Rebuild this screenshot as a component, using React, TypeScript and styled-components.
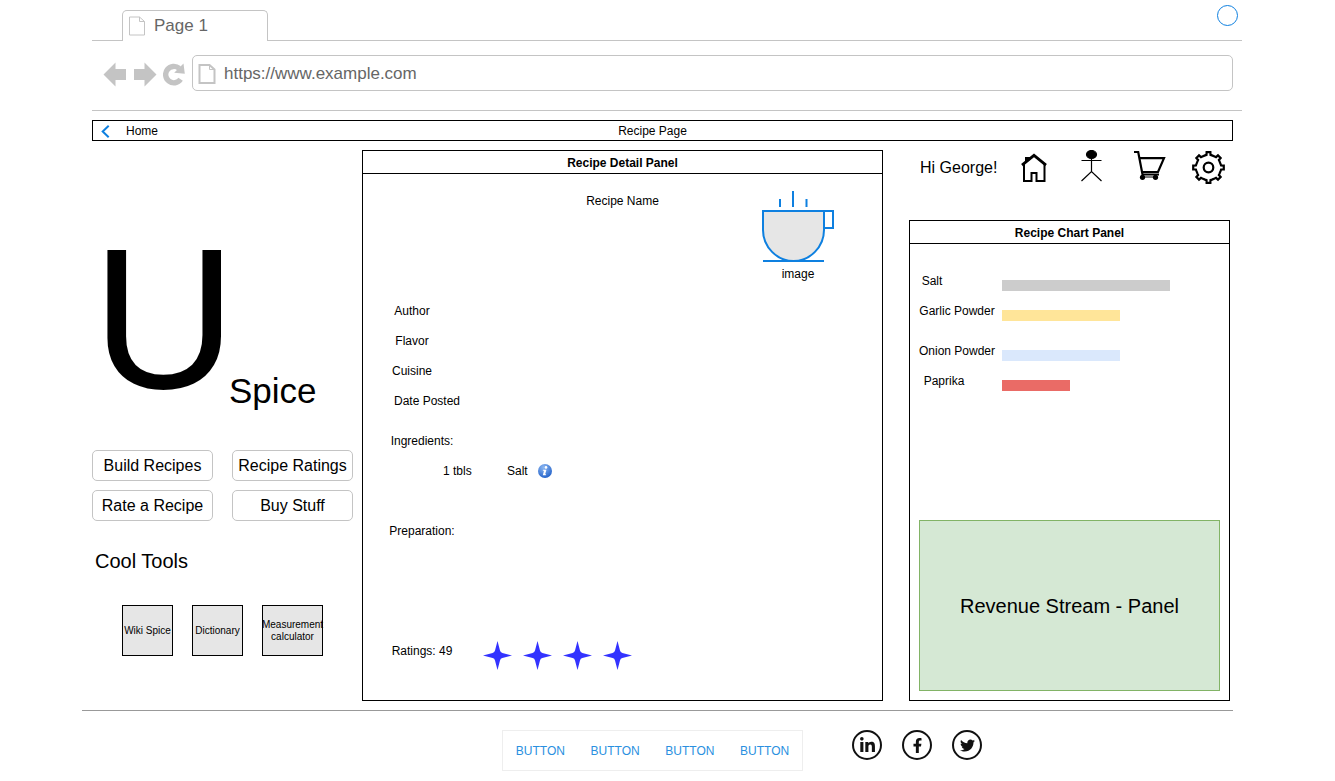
import React from "react";
import styled, { createGlobalStyle } from "styled-components";
import { FaFacebookF, FaLinkedinIn, FaTwitter } from "react-icons/fa";

const GlobalStyle = createGlobalStyle`
  *, *::before, *::after { box-sizing: border-box; }
  body {
    margin: 0;
    background: #fff;
    color: #000;
    font-family: "Liberation Sans", Arial, sans-serif;
    font-size: 12px;
    line-height: 20px;
  }
  h1, h2, p, ul, figure { margin: 0; padding: 0; }
  button, input { font: inherit; color: inherit; }
  a { color: inherit; text-decoration: none; }
  svg { display: block; flex: none; }
`;

const chrome = "#c4c4c4";
const blue = "#0e80e0";

/* ---------- browser frame ---------- */

const Frame = styled.header`
  margin: 0 93px 0 92px;
`;

const TabStrip = styled.div`
  display: flex;
  justify-content: space-between;
  align-items: flex-end;
  height: 41px;
  padding: 0 4px 0 30px;
  border-bottom: 1px solid ${chrome};
`;

const Tab = styled.button`
  display: flex;
  align-items: center;
  gap: 8px;
  width: 146px;
  height: 31px;
  margin-bottom: -1px;
  padding: 0 5px;
  border: 1px solid ${chrome};
  border-bottom: 0;
  border-radius: 5px 5px 0 0;
  background: #fff;
  color: #666;
  font-size: 17px;
`;

const WindowButton = styled.button`
  width: 21px;
  height: 21px;
  margin-bottom: 14px;
  padding: 0;
  border: 1px solid ${blue};
  border-radius: 50%;
  background: #fff;
`;

const Toolbar = styled.div`
  display: flex;
  align-items: center;
  gap: 6px;
  padding: 14px 9px 19px 11px;
  border-bottom: 1px solid ${chrome};
`;

const NavButton = styled.button`
  display: flex;
  padding: 2px 0 0;
  border: 0;
  background: none;
  color: ${chrome};
`;

const Address = styled.label`
  display: flex;
  flex: 1;
  align-items: center;
  gap: 8px;
  height: 36px;
  margin-left: 1px;
  padding: 1px 5px 0;
  border: 1px solid ${chrome};
  border-radius: 5px;
  color: #666;
  font-size: 17px;
`;

const AddressInput = styled.input`
  flex: 1;
  min-width: 0;
  padding: 0;
  border: 0;
  outline: 0;
  background: none;
`;

/* ---------- page ---------- */

const Page = styled.div`
  margin: 9px 102px 0 92px;
`;

const TitleBar = styled.nav`
  display: grid;
  grid-template-columns: 1fr auto 1fr;
  align-items: center;
  height: 21px;
  padding: 0 28px 0 8px;
  border: 1px solid #000;
`;

const BackLink = styled.a`
  display: flex;
  align-items: center;
  gap: 16px;
`;

const PageTitle = styled.h1`
  font-size: 12px;
  font-weight: 400;
`;

const Columns = styled.main`
  display: grid;
  grid-template-columns: 261px minmax(0, 1fr) 321px;
  padding: 9px 3px 0 0;
`;

const Sidebar = styled.aside`
  display: flex;
  flex-direction: column;
`;

const Logo = styled.div`
  display: flex;
  height: 300px;
`;

const LogoLetter = styled.span`
  width: 137px;
  padding-top: 56px;
  font-size: 200px;
  line-height: 226px;
`;

const LogoWord = styled.span`
  padding-top: 221px;
  font-size: 35px;
  line-height: 40px;
`;

const Actions = styled.div`
  display: grid;
  grid-template-columns: 1fr 1fr;
  gap: 9px 19px;
`;

const ActionButton = styled.button`
  height: 31px;
  padding: 0;
  border: 1px solid ${chrome};
  border-radius: 5px;
  background: #fff;
  font-size: 16px;
  white-space: nowrap;
`;

const ToolsHeading = styled.h2`
  margin: 28px 0 0 3px;
  font-size: 20px;
  font-weight: 400;
  line-height: 24px;
`;

const Tools = styled.div`
  display: flex;
  gap: 19px;
  margin: 32px 0 0 30px;
`;

const ToolButton = styled.button<{ $wide?: boolean }>`
  display: flex;
  align-items: center;
  justify-content: center;
  width: ${(p) => (p.$wide ? 61 : 51)}px;
  height: 51px;
  padding: 0;
  border: 1px solid #000;
  background: #e6e6e6;
  font-size: 10px;
  line-height: 12px;
`;

const Panel = styled.section`
  display: flex;
  flex-direction: column;
  border: 1px solid #000;
`;

const DetailPanel = styled(Panel)`
  margin: 0 26px 0 9px;
  padding-bottom: 30px;
`;

const PanelTitle = styled.h2`
  height: 23px;
  border-bottom: 1px solid #000;
  font-size: 12px;
  line-height: 24px;
  text-align: center;
`;

const Hero = styled.div`
  display: grid;
  grid-template-columns: 1fr auto 1fr;
  height: 127px;
  padding-top: 16px;
`;

const RecipeName = styled.p`
  grid-column: 2;
  line-height: 22px;
`;

const Picture = styled.figure`
  justify-self: end;
  margin-right: 48px;
  line-height: 22px;
  text-align: center;
`;

const Fields = styled.div`
  display: flex;
  flex-direction: column;
  gap: 10px;
  padding-left: 29px;
`;

const Label = styled.p<{ $width: number }>`
  display: flex;
  justify-content: center;
  width: ${(p) => p.$width}px;
  white-space: nowrap;
`;

const Section = styled.div<{ $gap: number }>`
  margin-top: ${(p) => p.$gap}px;
  padding-left: 29px;
`;

const Ingredient = styled.div`
  display: flex;
  align-items: center;
  margin-top: 10px;
  padding-left: 51px;
`;

const Amount = styled.span`
  width: 64px;
`;

const InfoButton = styled.button`
  display: flex;
  margin-left: 10px;
  padding: 0;
  border: 0;
  background: none;
`;

const Ratings = styled(Section)`
  display: flex;
`;

const Stars = styled.div`
  display: flex;
  gap: 11px;
  margin-left: 31px;
`;

const RightColumn = styled.div`
  display: flex;
  flex-direction: column;
`;

const UserBar = styled.div`
  display: flex;
  align-items: flex-start;
  justify-content: space-between;
  height: 70px;
  padding: 0 5px 0 11px;
`;

const Greeting = styled.span`
  padding-top: 8px;
  font-size: 16px;
`;

const UserActions = styled.div`
  display: flex;
  gap: 24px;
`;

const IconButton = styled.button`
  display: flex;
  justify-content: center;
  width: 34px;
  padding: 0;
  border: 0;
  background: none;
`;

const ChartPanel = styled(Panel)`
  flex: 1;
`;

const Chart = styled.div`
  display: flex;
  flex-direction: column;
  gap: 20px;
  padding: 27px 0 0 2px;
`;

const ChartGroup = styled.div`
  display: flex;
  flex-direction: column;
  gap: 10px;
`;

const ChartRow = styled.div`
  display: grid;
  grid-template-columns: 90px 1fr;
  align-items: end;
  height: 20px;
`;

const Bar = styled.div<{ $length: number; $color: string }>`
  width: ${(p) => p.$length}px;
  height: 11px;
  background: ${(p) => p.$color};
`;

const Revenue = styled.div`
  display: flex;
  align-items: center;
  justify-content: center;
  height: 171px;
  margin: auto 9px 9px;
  border: 1px solid #82b366;
  background: #d5e8d4;
  font-size: 20px;
`;

const Footer = styled.footer`
  display: flex;
  justify-content: center;
  gap: 49px;
  margin: 9px 102px 0 82px;
  padding: 19px 0 10px 169px;
  border-top: 1px solid #999;
`;

const ButtonGroup = styled.div`
  display: grid;
  grid-template-columns: repeat(4, 1fr);
  width: 301px;
  height: 41px;
  border: 1px solid #eee;
`;

const TextButton = styled.button`
  padding: 0;
  border: 0;
  background: none;
  color: #2a90e0;
`;

const Socials = styled.div`
  display: flex;
  gap: 20px;
`;

const SocialLink = styled.a`
  display: flex;
  align-items: center;
  justify-content: center;
  width: 30px;
  height: 30px;
  border: 2px solid #111;
  border-radius: 50%;
  color: #111;
`;

/* ---------- drawings ---------- */

const DocIcon = ({ stroke }: { stroke: number }) => (
  <svg width="18" height="20" viewBox="0 0 18 20" fill="none" stroke={chrome} strokeWidth={stroke}>
    <path d="M1.5 1H11.5L16.5 5.5V19H1.5Z" />
    <path d="M11.5 1V5.5H16.5" strokeWidth="1" />
  </svg>
);

const ArrowIcon = ({ forward }: { forward?: boolean }) => (
  <svg width="24" height="25" viewBox="0 0 24 25" fill="currentColor">
    <path d={forward ? "M23.5 12.5L11.5 0.5V7H1V18H11.5V24.5Z" : "M0.5 12.5L12.5 0.5V7H23V18H12.5V24.5Z"} />
  </svg>
);

const ReloadIcon = () => (
  <svg width="22" height="24" viewBox="0 0 22 24">
    <path d="M16.2 6.4A8.2 8.2 0 1 0 17.6 17.3" fill="none" stroke="currentColor" strokeWidth="5.4" />
    <path d="M20.5 1.5L21.8 11.8L11.2 10.8Z" fill="currentColor" />
  </svg>
);

const ChevronIcon = () => (
  <svg width="9" height="13" viewBox="0 0 9 13" fill="none" stroke={blue} strokeWidth="2">
    <path d="M7.7 0.8L1.7 6.5L7.7 12.2" />
  </svg>
);

const CupIcon = () => (
  <svg width="72" height="73" viewBox="0 0 72 73" fill="none" stroke={blue} strokeWidth="2">
    <path d="M18 9V17M31 1V17M44.5 9V17" />
    <path d="M62 21H71V38H62" />
    <path d="M1 21H62V40C62 57 48 71 31.5 71S1 57 1 40Z" fill="#e6e6e6" />
    <path d="M1 71H62" />
  </svg>
);

const InfoIcon = () => (
  <svg width="14" height="14" viewBox="0 0 14 14">
    <defs>
      <radialGradient id="info" cx="40%" cy="25%" r="80%">
        <stop offset="0" stopColor="#8db8f2" />
        <stop offset="1" stopColor="#1f5fc8" />
      </radialGradient>
    </defs>
    <circle cx="7" cy="7" r="7" fill="url(#info)" />
    <circle cx="8" cy="3.4" r="1.3" fill="#fff" />
    <path d="M5 5.8H8.4L7.2 10.2H8.2L7.8 11.2H4.8L6 6.8H4.8Z" fill="#fff" />
  </svg>
);

const StarIcon = () => (
  <svg width="29" height="29" viewBox="0 0 29 29" fill="#3333ff">
    <path d="M14.5 0L17 9.6Q17.4 11.6 19.4 12L29 14.5L19.4 17Q17.4 17.4 17 19.4L14.5 29L12 19.4Q11.6 17.4 9.6 17L0 14.5L9.6 12Q11.6 11.6 12 9.6Z" />
  </svg>
);

const HouseIcon = () => (
  <svg width="26" height="32" viewBox="0 0 26 32" fill="none" stroke="#000" strokeWidth="2">
    <path d="M3 13V31H10.5V23H15.5V31H23.5V13" />
    <path d="M1 15.2L13 5.4L25 15.2" strokeWidth="2.8" />
    <path d="M4 7H9V9.5L4 13.5Z" fill="#000" stroke="none" />
  </svg>
);

const PersonIcon = () => (
  <svg width="22" height="32" viewBox="0 0 22 32" fill="none" stroke="#000" strokeWidth="1.2">
    <ellipse cx="10.5" cy="4.5" rx="5" ry="4" fill="#000" />
    <path d="M10.5 8V21.5M0.5 10.5H20.5M0.5 31L10.5 21.5L20.5 31" />
  </svg>
);

const CartIcon = () => (
  <svg width="32" height="32" viewBox="0 0 32 32" fill="none" stroke="#000" strokeWidth="2.2">
    <path d="M0 2H4.2L8.5 24.5H25" />
    <path d="M5.2 8.2H30L24 22H8" />
    <path d="M8.5 24.5L7.5 27H23" strokeWidth="1" />
    <circle cx="8.5" cy="27.3" r="2.6" fill="#000" stroke="none" />
    <circle cx="21.5" cy="27.3" r="2.6" fill="#000" stroke="none" />
  </svg>
);

const gearPath = (() => {
  const points: string[] = [];
  for (let tooth = 0; tooth < 8; tooth++) {
    const middle = tooth * 45;
    const corners: [number, number][] = [
      [-16, 12.6],
      [-9, 12.8],
      [-7, 15.4],
      [7, 15.4],
      [9, 12.8],
      [16, 12.6],
    ];
    for (const [offset, radius] of corners) {
      const angle = ((middle + offset) * Math.PI) / 180;
      points.push(`${(16.5 + radius * Math.sin(angle)).toFixed(2)} ${(17.5 - radius * Math.cos(angle)).toFixed(2)}`);
    }
  }
  return `M${points.join("L")}Z`;
})();

const GearIcon = () => (
  <svg width="33" height="35" viewBox="0 0 33 35" fill="none" stroke="#000" strokeWidth="2.2">
    <path d={gearPath} />
    <circle cx="16.5" cy="17.5" r="4.8" />
  </svg>
);

/* ---------- data ---------- */

const fields = [
  { text: "Author", width: 40 },
  { text: "Flavor", width: 40 },
  { text: "Cuisine", width: 40 },
  { text: "Date Posted", width: 70 },
];

const spices = [
  [
    { name: "Salt", label: 40, length: 168, color: "#cccccc" },
    { name: "Garlic Powder", label: 90, length: 118, color: "#ffe599" },
  ],
  [
    { name: "Onion Powder", label: 90, length: 118, color: "#dae8fc" },
    { name: "Paprika", label: 64, length: 68, color: "#ea6b66" },
  ],
];

export default function App() {
  return (
    <>
      <GlobalStyle />
      <Frame>
        <TabStrip>
          <Tab type="button">
            <DocIcon stroke={1} />
            Page 1
          </Tab>
          <WindowButton type="button" aria-label="Window menu" />
        </TabStrip>
        <Toolbar>
          <NavButton type="button" aria-label="Back"><ArrowIcon /></NavButton>
          <NavButton type="button" aria-label="Forward"><ArrowIcon forward /></NavButton>
          <NavButton type="button" aria-label="Reload"><ReloadIcon /></NavButton>
          <Address>
            <DocIcon stroke={2} />
            <AddressInput type="text" aria-label="Address" defaultValue="https://www.example.com" />
          </Address>
        </Toolbar>
      </Frame>

      <Page>
        <TitleBar>
          <BackLink href="#home">
            <ChevronIcon />
            Home
          </BackLink>
          <PageTitle>Recipe Page</PageTitle>
        </TitleBar>

        <Columns>
          <Sidebar>
            <Logo>
              <LogoLetter>U</LogoLetter>
              <LogoWord>Spice</LogoWord>
            </Logo>
            <Actions>
              <ActionButton type="button">Build Recipes</ActionButton>
              <ActionButton type="button">Recipe Ratings</ActionButton>
              <ActionButton type="button">Rate a Recipe</ActionButton>
              <ActionButton type="button">Buy Stuff</ActionButton>
            </Actions>
            <ToolsHeading>Cool Tools</ToolsHeading>
            <Tools>
              <ToolButton type="button">Wiki Spice</ToolButton>
              <ToolButton type="button">Dictionary</ToolButton>
              <ToolButton type="button" $wide>Measurement calculator</ToolButton>
            </Tools>
          </Sidebar>

          <DetailPanel>
            <PanelTitle>Recipe Detail Panel</PanelTitle>
            <Hero>
              <RecipeName>Recipe Name</RecipeName>
              <Picture>
                <CupIcon />
                <figcaption>image</figcaption>
              </Picture>
            </Hero>
            <Fields>
              {fields.map((field) => (
                <Label key={field.text} $width={field.width}>{field.text}</Label>
              ))}
            </Fields>
            <Section $gap={20}>
              <Label $width={60}>Ingredients:</Label>
              <Ingredient>
                <Amount>1 tbls</Amount>
                <span>Salt</span>
                <InfoButton type="button" aria-label="About salt"><InfoIcon /></InfoButton>
              </Ingredient>
            </Section>
            <Section $gap={40}>
              <Label $width={60}>Preparation:</Label>
            </Section>
            <Ratings $gap={100}>
              <Label $width={60}>Ratings: 49</Label>
              <Stars>
                <StarIcon />
                <StarIcon />
                <StarIcon />
                <StarIcon />
              </Stars>
            </Ratings>
          </DetailPanel>

          <RightColumn>
            <UserBar>
              <Greeting>Hi George!</Greeting>
              <UserActions>
                <IconButton type="button" aria-label="Home"><HouseIcon /></IconButton>
                <IconButton type="button" aria-label="Profile"><PersonIcon /></IconButton>
                <IconButton type="button" aria-label="Cart"><CartIcon /></IconButton>
                <IconButton type="button" aria-label="Settings"><GearIcon /></IconButton>
              </UserActions>
            </UserBar>
            <ChartPanel>
              <PanelTitle>Recipe Chart Panel</PanelTitle>
              <Chart>
                {spices.map((group) => (
                  <ChartGroup key={group[0].name}>
                    {group.map((spice) => (
                      <ChartRow key={spice.name}>
                        <Label $width={spice.label}>{spice.name}</Label>
                        <Bar $length={spice.length} $color={spice.color} />
                      </ChartRow>
                    ))}
                  </ChartGroup>
                ))}
              </Chart>
              <Revenue>Revenue Stream - Panel</Revenue>
            </ChartPanel>
          </RightColumn>
        </Columns>
      </Page>

      <Footer>
        <ButtonGroup>
          <TextButton type="button">BUTTON</TextButton>
          <TextButton type="button">BUTTON</TextButton>
          <TextButton type="button">BUTTON</TextButton>
          <TextButton type="button">BUTTON</TextButton>
        </ButtonGroup>
        <Socials>
          <SocialLink href="#linkedin" aria-label="LinkedIn"><FaLinkedinIn size={17} /></SocialLink>
          <SocialLink href="#facebook" aria-label="Facebook"><FaFacebookF size={15} /></SocialLink>
          <SocialLink href="#twitter" aria-label="Twitter"><FaTwitter size={15} /></SocialLink>
        </Socials>
      </Footer>
    </>
  );
}
